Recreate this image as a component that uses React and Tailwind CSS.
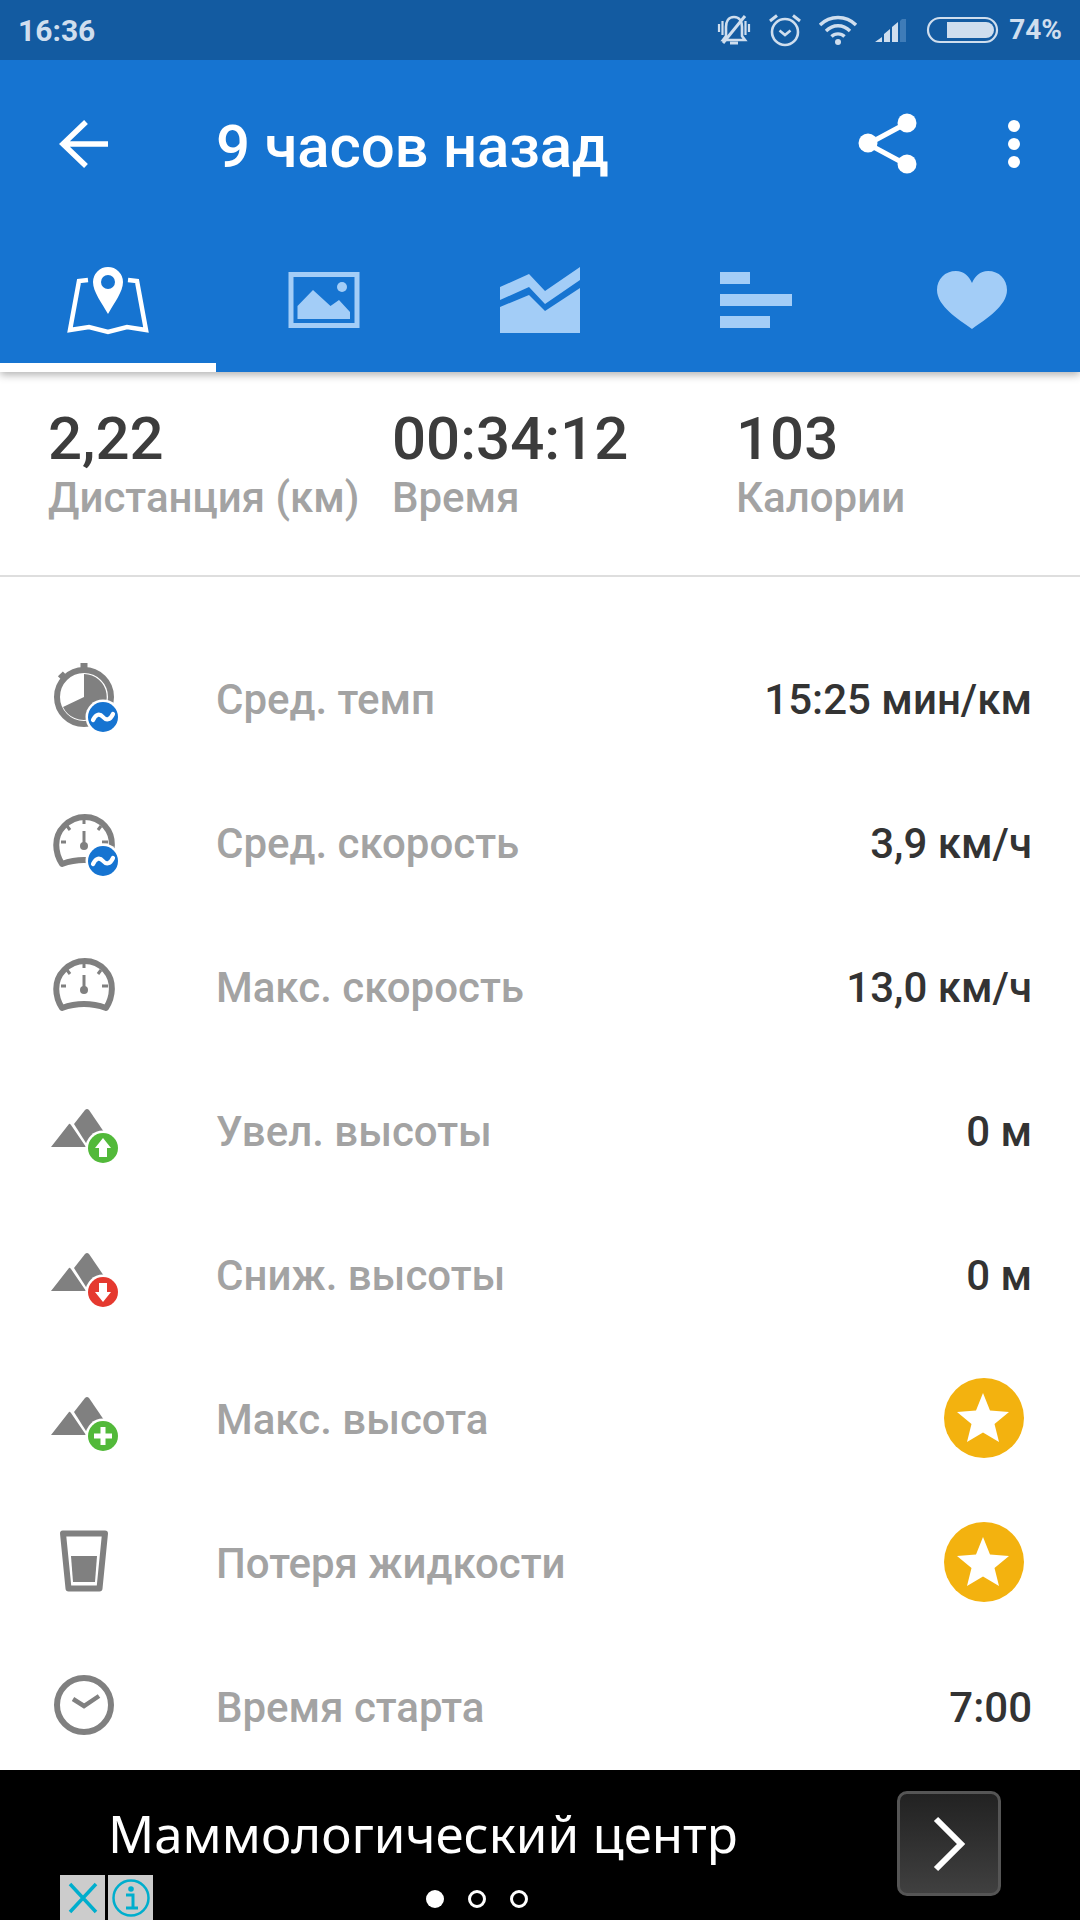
const ROW_LABEL = "text-[42px] font-medium text-[#a3a3a3]";
const G = "#808080";

function Badge({ color, children, cx = 53, cy = 54 }) {
  return (
    <g transform={`translate(${cx} ${cy})`}>
      <circle r="17.5" fill="#fff" />
      <circle r="15" fill={color} />
      {children}
    </g>
  );
}
const Wave = () => <path d="M-10 3C-7 -3.500 -3 -3.500 0 0S7 3.500 10 -3" fill="none" stroke="#fff" strokeWidth="4.200" strokeLinecap="round" />;

function Gauge() {
  return (
    <g>
      <path d="M12 57 C5 46 3 30 14 19 C26 7 44 7 55 19 C65 30 63 46 56 57 C42 52 26 52 12 57Z" fill="none" stroke={G} strokeWidth="6" strokeLinejoin="round" />
      <path d="M34 12V17M11 35H16M52 35H58M17 19L20 23M51 19L48 23" stroke={G} strokeWidth="3" />
      <path d="M34 24V38" stroke={G} strokeWidth="3" />
      <circle cx="34" cy="39" r="4" fill={G} />
    </g>
  );
}
function Mountains() {
  return (
    <g fill={G}>
      <path d="M19 29L1 52H36L21 30Q19.500 28 19 29Z" />
      <path d="M35 15Q37 13 39 15L54 37L36 48L24 29Z" />
    </g>
  );
}
const Ico = ({ children }) => <svg width="72" height="72" viewBox="0 0 72 72" className="shrink-0">{children}</svg>;

const Pace = () => (
  <Ico>
    <circle cx="34" cy="34" r="27" fill="none" stroke={G} strokeWidth="6" />
    <rect x="30.500" y="0" width="7" height="6" fill={G} />
    <rect x="9" y="10" width="7" height="6" fill={G} transform="rotate(-45 12.500 13)" />
    <path d="M34 34V11A23 23 0 1 1 13 44Z" fill={G} />
    <Badge color="#1674d1"><Wave /></Badge>
  </Ico>
);
const AvgSpeed = () => <Ico><Gauge /><Badge color="#1674d1"><Wave /></Badge></Ico>;
const MaxSpeed = () => <Ico><Gauge /></Ico>;
const Gain = () => (
  <Ico><Mountains /><Badge color="#52b93a" cy={53}><path d="M0 -10L8 0H4V9H-4V0H-8Z" fill="#fff" /></Badge></Ico>
);
const Loss = () => (
  <Ico><Mountains /><Badge color="#e5392f" cy={53}><path d="M0 10L8 0H4V-9H-4V0H-8Z" fill="#fff" /></Badge></Ico>
);
const MaxAlt = () => (
  <Ico><Mountains /><Badge color="#52b93a" cy={53}><path d="M-9 0H9M0 -9V9" stroke="#fff" strokeWidth="5" /></Badge></Ico>
);
const Glass = () => (
  <Ico>
    <path d="M13 6.500H55L49.500 61.500H18.500Z" fill="none" stroke={G} strokeWidth="6" strokeLinejoin="round" />
    <path d="M21 29H47L45 55H23Z" fill={G} />
  </Ico>
);
const Clock = () => (
  <Ico>
    <circle cx="34" cy="34" r="27" fill="none" stroke={G} strokeWidth="6" />
    <path d="M23 28L34 35L49 25" fill="none" stroke={G} strokeWidth="4.500" />
  </Ico>
);
const Star = () => (
  <svg width="80" height="80" viewBox="0 0 80 80" className="mr-[8px] mb-[2px]">
    <circle cx="40" cy="40" r="40" fill="#f3b20f" />
    <path d="M39 15L46 32.500L65 34L50.500 46L55 64L39 54.500L23 64L27.500 46L13 34L32 32.500Z" fill="#fff" />
  </svg>
);

const rows = [
  [Pace, "Сред. темп", "15:25 мин/км"],
  [AvgSpeed, "Сред. скорость", "3,9 км/ч"],
  [MaxSpeed, "Макс. скорость", "13,0 км/ч"],
  [Gain, "Увел. высоты", "0 м"],
  [Loss, "Сниж. высоты", "0 м"],
  [MaxAlt, "Макс. высота", null],
  [Glass, "Потеря жидкости", null],
  [Clock, "Время старта", "7:00"],
];

const TAB = "#a3cdf7";

function StatusIcons() {
  const c = "#cfdeee";
  return (
    <div className="flex items-center">
      <svg width="36" height="36" viewBox="0 0 36 36" className="mr-[15px]">
        <path d="M18 5C12 5 10 10 10 15V24L7 28H29L26 24V15C26 10 24 5 18 5Z" fill="none" stroke={c} strokeWidth="2.600" />
        <path d="M14 31H22" stroke={c} strokeWidth="3" />
        <path d="M3 12V20M6.500 9V23M33 12V20M29.500 9V23" stroke={c} strokeWidth="2.200" />
        <path d="M7 31L29 4" stroke={c} strokeWidth="3" />
      </svg>
      <svg width="36" height="36" viewBox="0 0 36 36" className="mr-[15px]">
        <circle cx="18" cy="20" r="13" fill="none" stroke={c} strokeWidth="2.600" />
        <path d="M12.500 18.500L18 23L23.500 18.500" fill="none" stroke={c} strokeWidth="2.600" />
        <path d="M3 9L10 3.500M33 9L26 3.500" stroke={c} strokeWidth="3" />
      </svg>
      <svg width="40" height="32" viewBox="0 0 40 32" className="mr-[15px]">
        <path d="M2 11C12 1 28 1 38 11M8 17C15 10 25 10 32 17M13.500 22.500C17 19 23 19 26.500 22.500" fill="none" stroke={c} strokeWidth="3.400" />
        <circle cx="20" cy="28" r="3" fill={c} />
      </svg>
      <svg width="38" height="28" viewBox="0 0 38 28" className="mr-[15px]">
        <path d="M2 26L9 21V26ZM11 26V18L17 13V26Z" fill={c} />
        <path d="M19 26V11L25 6V26Z" fill={c} />
        <path d="M27 26V5L29 3H33V26Z" fill="#3f7cb8" />
      </svg>
      <svg width="74" height="28" viewBox="0 0 74 28" className="mr-[9px]">
        <rect x="2" y="2" width="69" height="24" rx="12" fill="none" stroke={c} strokeWidth="2.200" />
        <path d="M21 6H60A8 8 0 0 1 60 22H21Z" fill={c} />
      </svg>
      <span className="text-[28px] font-bold text-[#cfdeee]">74%</span>
    </div>
  );
}

export default function App() {
  return (
    <div className="w-[1080px] h-[1920px] flex flex-col bg-white overflow-hidden font-['Roboto',sans-serif]">
      <div className="relative z-10 bg-[#1674d1] shadow-[0_3px_8px_rgba(0,0,0,0.3)]">
        <div className="h-[60px] bg-[#135ba1] flex items-center justify-between pl-[18px] pr-[18px]">
          <span className="text-[30px] font-bold text-[#cfdeee]">16:36</span>
          <StatusIcons />
        </div>
        <div className="h-[168px] flex items-center">
          <svg width="60" height="60" viewBox="0 0 60 60" className="ml-[52px]">
            <path d="M56 30H11M34 8L11 30L34 52" fill="none" stroke="#fff" strokeWidth="5.500" />
          </svg>
          <h1 className="ml-[104px] flex-1 text-[60px] font-medium text-white pt-[5px] tracking-[-0.2px]">9 часов назад</h1>
          <svg width="70" height="70" viewBox="0 0 70 70" className="mr-[83px]">
            <path d="M56 14L17 35L56 56" fill="none" stroke="#fff" strokeWidth="5" />
            <circle cx="56" cy="14" r="9.500" fill="#fff" />
            <circle cx="17" cy="34" r="9.500" fill="#fff" />
            <circle cx="56" cy="55" r="9.500" fill="#fff" />
          </svg>
          <svg width="20" height="60" viewBox="0 0 20 60" className="mr-[56px]">
            <circle cx="10" cy="12" r="6" fill="#fff" />
            <circle cx="10" cy="30" r="6" fill="#fff" />
            <circle cx="10" cy="48" r="6" fill="#fff" />
          </svg>
        </div>
        <div className="h-[144px] grid grid-cols-5">
          <div className="border-b-[9px] border-white flex justify-center pt-[32px]">
            <svg width="96" height="80" viewBox="60 260 96 80">
              <path d="M88 280L79 281L70 330L89 327L108 332L127 327L146 330L137 281L128 280" fill="none" stroke="#fff" strokeWidth="4.500" />
              <path d="M108 267A15 15 0 0 1 123 282C123 292 114 303 108 314C102 303 93 292 93 282A15 15 0 0 1 108 267Z" fill="#fff" />
              <circle cx="108" cy="282" r="7" fill="#1674d1" />
            </svg>
          </div>
          <div className="flex justify-center pt-[32px]">
            <svg width="80" height="80" viewBox="284 260 80 80">
              <rect x="291" y="274.500" width="66" height="51" fill="none" stroke={TAB} strokeWidth="5" />
              <path d="M297.500 319V306L313 290L330.500 306L339 300L350 312V319Z" fill={TAB} />
              <circle cx="342" cy="287" r="5" fill={TAB} />
            </svg>
          </div>
          <div className="flex justify-center pt-[32px]">
            <svg width="80" height="80" viewBox="500 260 80 80">
              <path d="M500 287L529 274L545 291L580 267V280L545 304L529 287L500 300Z" fill={TAB} />
              <path d="M500 307L529 295L545 311L580 288V333H500Z" fill={TAB} />
            </svg>
          </div>
          <div className="flex justify-center pt-[32px]">
            <svg width="80" height="80" viewBox="716 260 80 80">
              <rect x="720" y="272" width="30" height="12" fill={TAB} />
              <rect x="720" y="294" width="72" height="12" fill={TAB} />
              <rect x="720" y="316" width="50" height="12" fill={TAB} />
            </svg>
          </div>
          <div className="flex justify-center pt-[32px]">
            <svg width="80" height="80" viewBox="932 260 80 80">
              <path d="M972 329C958 319 937 306 937 290C937 279 945 271 956 271C964 271 969 276 972 283C975 276 980 271 988 271C999 271 1007 279 1007 290C1007 306 986 319 972 329Z" fill={TAB} />
            </svg>
          </div>
        </div>
      </div>

      <div className="h-[205px] shrink-0 border-b-2 border-[#dedede] flex pl-[48px]">
        {[["2,22", "Дистанция (км)", "w-[344px]"], ["00:34:12", "Время", "w-[344px]"], ["103", "Калории", ""]].map(([n, l, w]) => (
          <div key={l} className={`${w} pt-[32px]`}>
            <div className="text-[60px] leading-[70px] font-medium text-[#3c3c3c]">{n}</div>
            <div className="text-[42px] leading-[48px] font-medium text-[#a3a3a3] whitespace-nowrap">{l}</div>
          </div>
        ))}
      </div>

      <div className="flex-1 min-h-0 overflow-hidden pt-[50px]">
        {rows.map(([Icon, label, value]) => (
          <div key={label} className="h-[144px] flex items-center pl-[50px] pr-[48px]">
            <Icon />
            <span className={`ml-[94px] flex-1 ${ROW_LABEL}`}>{label}</span>
            {value ? <span className="text-[42px] font-medium text-[#333333]">{value}</span> : <Star />}
          </div>
        ))}
      </div>

      <div className="relative h-[150px] shrink-0 bg-black flex items-start pl-[108px] pr-[79px] pt-[21px]">
        <span className="flex-1 mt-[7px] text-[51px] leading-[70px] text-white font-['Noto_Sans',sans-serif]">Маммологический центр</span>
        <div className="w-[104px] h-[105px] rounded-[10px] border-[3px] border-[#555] bg-gradient-to-b from-[#222] to-[#404040] flex items-center justify-center">
          <svg width="40" height="56" viewBox="0 0 40 56">
            <path d="M7 3L32 28L7 53" fill="none" stroke="#fff" strokeWidth="6" />
          </svg>
        </div>
        <div className="absolute left-[60px] bottom-0 flex gap-[3px]">
          <div className="w-[45px] h-[45px] bg-[#cccccc] flex items-center justify-center">
            <svg width="36" height="36" viewBox="0 0 36 36"><path d="M5 4L31 32M31 4L5 32" stroke="#00aecd" strokeWidth="3.500" /></svg>
          </div>
          <div className="w-[45px] h-[45px] bg-[#cccccc] flex items-center justify-center">
            <svg width="40" height="40" viewBox="0 0 40 40">
              <circle cx="20" cy="20" r="17.500" fill="none" stroke="#00aecd" strokeWidth="2.500" />
              <circle cx="20" cy="11" r="2.800" fill="#00aecd" />
              <path d="M15 17H22V29M15 30H27" fill="none" stroke="#00aecd" strokeWidth="3" />
            </svg>
          </div>
        </div>
        <div className="absolute left-[426px] bottom-[12px] flex gap-[24px]">
          <div className="w-[18px] h-[18px] rounded-full bg-white" />
          <div className="w-[18px] h-[18px] rounded-full border-[3px] border-white" />
          <div className="w-[18px] h-[18px] rounded-full border-[3px] border-white" />
        </div>
      </div>
    </div>
  );
}
